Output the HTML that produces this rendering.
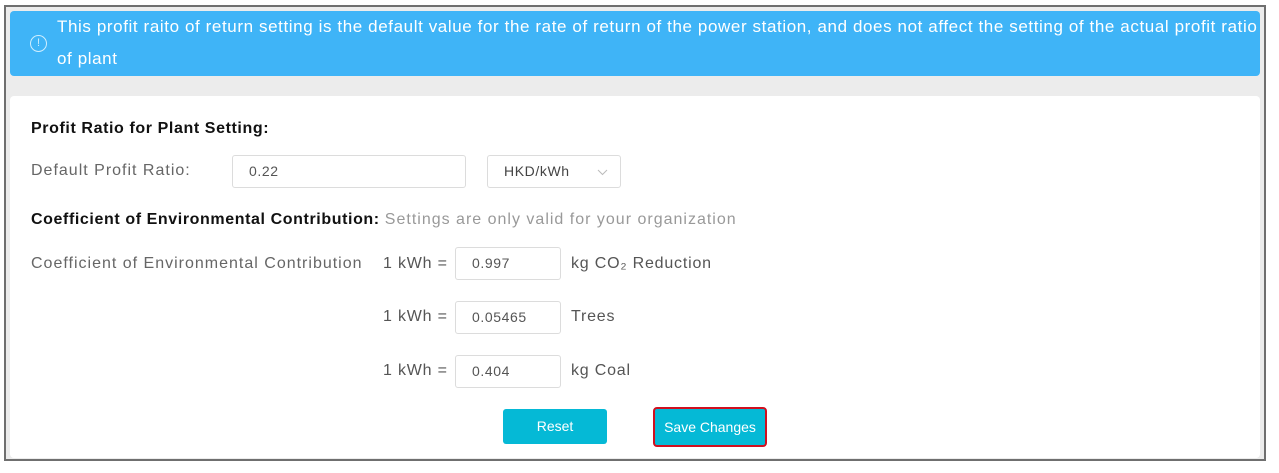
<!DOCTYPE html>
<html><head><style>
*{margin:0;padding:0;box-sizing:border-box}
body{width:1279px;height:473px;background:#fff;font-family:"Liberation Sans","DejaVu Sans",sans-serif;position:relative;overflow:hidden}
.frame{position:absolute;left:4px;top:5px;width:1262px;height:456px;border:2px solid #6f6f6f;background:#ececec}
.banner{position:absolute;left:10px;top:11px;width:1250px;height:65px;background:#3fb4f7;border-radius:4px;color:#fff;font-size:17px;letter-spacing:0.6px;overflow:hidden}
.banner .t1{position:absolute;left:47px;top:5px;white-space:nowrap;line-height:22px}
.banner .t2{position:absolute;left:47px;top:37px;line-height:22px}
.icon{position:absolute;left:20px;top:24px;width:17px;height:17px;border:1.3px solid #cfeefe;border-radius:50%;color:#cfeefe;font-size:11px;text-align:center;line-height:14px;letter-spacing:0}
.card{position:absolute;left:10px;top:96px;width:1250px;height:362px;background:#fff;border-radius:4px}
.abs{position:absolute;white-space:nowrap}
.h{font-weight:bold;font-size:16px;color:#111;letter-spacing:0.6px}
.lab{font-size:16px;color:#666;letter-spacing:1px}
.inp{position:absolute;border:1px solid #dcdcdc;border-radius:3px;background:#fff;font-size:14px;color:#555;padding-left:16px;letter-spacing:0.6px}
.btn{position:absolute;background:#05b9d6;color:#fff;font-size:14px;text-align:center;border-radius:3px}
</style></head><body>
<div class="frame"></div>
<div class="banner"><div class="icon">!</div>
<div class="t1">This profit raito of return setting is the default value for the rate of return of the power station, and does not affect the setting of the actual profit ratio</div>
<div class="t2">of plant</div></div>
<div class="card"></div>
<div class="abs h" style="left:31px;top:120px">Profit Ratio for Plant Setting:</div>
<div class="abs lab" style="left:31px;top:162px">Default Profit Ratio:</div>
<div class="inp" style="left:232px;top:155px;width:234px;height:33px;line-height:31px">0.22</div>
<div class="inp" style="left:487px;top:155px;width:134px;height:33px;line-height:31px;color:#444">HKD/kWh<svg style="position:absolute;right:12px;top:13px" width="11" height="7" viewBox="0 0 11 7"><path d="M1 1l4.5 4.5L10 1" fill="none" stroke="#bbb" stroke-width="1"/></svg></div>
<div class="abs h" style="left:31px;top:211px">Coefficient of Environmental Contribution: <span style="font-weight:normal;color:#999;letter-spacing:1px">Settings are only valid for your organization</span></div>
<div class="abs lab" style="left:31px;top:255px">Coefficient of Environmental Contribution</div>
<div class="abs lab" style="left:383px;top:255px;color:#555;letter-spacing:0.8px">1 kWh =</div>
<div class="inp" style="left:455px;top:247px;width:106px;height:33px;line-height:31px">0.997</div>
<div class="abs lab" style="left:571px;top:255px;color:#555;letter-spacing:0.8px">kg CO₂ Reduction</div>
<div class="abs lab" style="left:383px;top:308px;color:#555;letter-spacing:0.8px">1 kWh =</div>
<div class="inp" style="left:455px;top:301px;width:106px;height:33px;line-height:31px">0.05465</div>
<div class="abs lab" style="left:571px;top:308px;color:#555;letter-spacing:0.8px">Trees</div>
<div class="abs lab" style="left:383px;top:362px;color:#555;letter-spacing:0.8px">1 kWh =</div>
<div class="inp" style="left:455px;top:355px;width:106px;height:33px;line-height:31px">0.404</div>
<div class="abs lab" style="left:571px;top:362px;color:#555;letter-spacing:0.8px">kg Coal</div>
<div class="btn" style="left:503px;top:409px;width:104px;height:35px;line-height:35px">Reset</div>
<div class="btn" style="left:653px;top:407px;width:114px;height:40px;line-height:36px;border:2px solid #d0101f;border-radius:4px">Save Changes</div>
</body></html>
